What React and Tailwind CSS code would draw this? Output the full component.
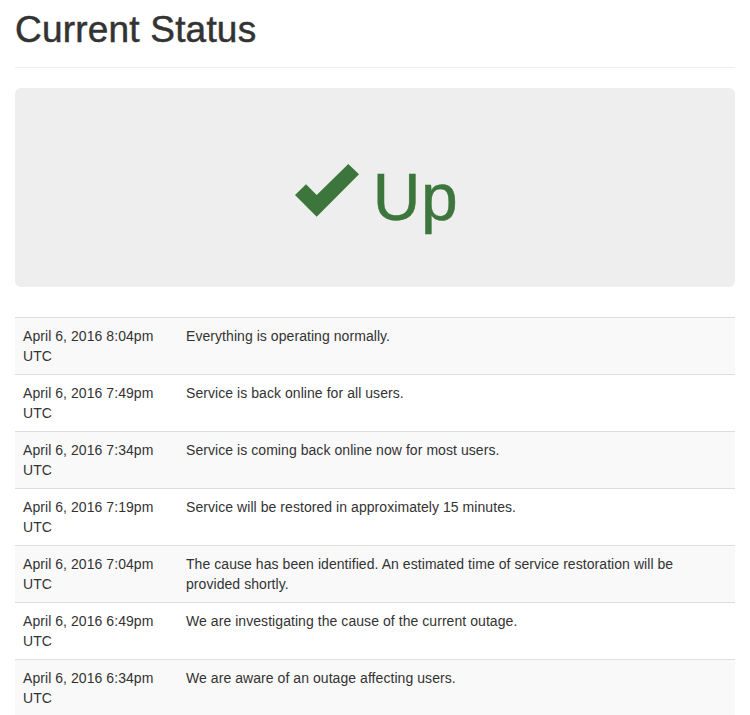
const rows = [
  ['April 6, 2016 8:04pm UTC', 'Everything is operating normally.'],
  ['April 6, 2016 7:49pm UTC', 'Service is back online for all users.'],
  ['April 6, 2016 7:34pm UTC', 'Service is coming back online now for most users.'],
  ['April 6, 2016 7:19pm UTC', 'Service will be restored in approximately 15 minutes.'],
  ['April 6, 2016 7:04pm UTC', 'The cause has been identified. An estimated time of service restoration will be provided shortly.'],
  ['April 6, 2016 6:49pm UTC', 'We are investigating the cause of the current outage.'],
  ['April 6, 2016 6:34pm UTC', 'We are aware of an outage affecting users.'],
];

function CheckIcon() {
  return (
    <svg width="64" height="53" viewBox="0 0 64 53" className="shrink-0">
      <polygon points="0,31 11,20.3 21.7,31 53.3,0 64,10.3 21.7,52.7" fill="#3c763d" />
    </svg>
  );
}

export default function App() {
  return (
    <div className="min-h-screen bg-white px-[15px] text-[#333] font-['Liberation_Sans',Arial,sans-serif]">
      {/* Page header */}
      <div className="pt-[10px] pb-[17px] border-b border-[#eee]">
        <h1 className="text-[37px] leading-[40px] font-medium tracking-[0.2px] [-webkit-text-stroke:0.5px_#333]">Current Status</h1>
      </div>

      {/* Status box */}
      <div className="mt-[20px] h-[199px] rounded-[6px] bg-[#eee] flex justify-center items-start gap-[14px] pt-[76px] pl-[3px]">
        <CheckIcon />
        <span className="mt-[1px] text-[66px] leading-[64px] tracking-[0.5px] text-[#3c763d] [-webkit-text-stroke:0.5px_#3c763d]">Up</span>
      </div>

      {/* History */}
      <table className="mt-[30px] w-full border-collapse text-[14px] leading-[20px] tracking-[0.06px]">
        <tbody>
          {rows.map(([when, msg], i) => (
            <tr key={i} className={i % 2 === 0 ? 'bg-[#f9f9f9]' : 'bg-white'}>
              <td className="w-[163px] border-t border-[#ddd] p-[8px] align-top">{when}</td>
              <td className="border-t border-[#ddd] py-[8px] pl-[8px] pr-[12px] align-top">{msg}</td>
            </tr>
          ))}
        </tbody>
      </table>
    </div>
  );
}
